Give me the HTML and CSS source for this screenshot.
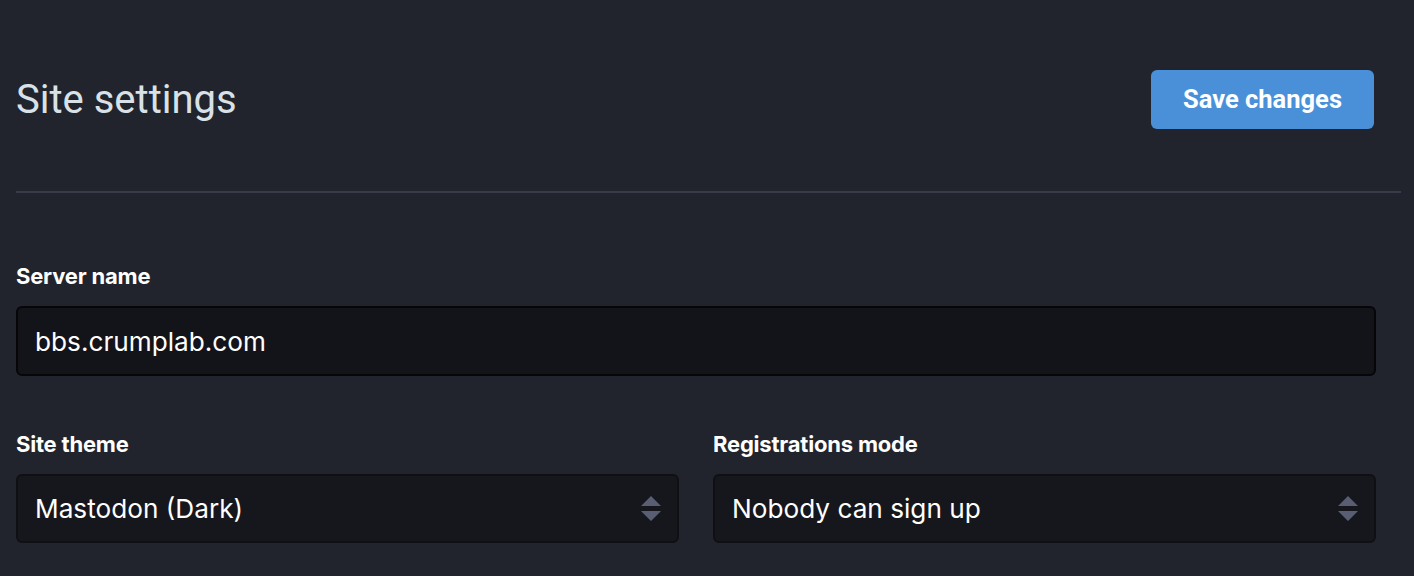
FILE: index.html
```html
<!DOCTYPE html>
<html lang="en">
<head>
<meta charset="utf-8">
<title>Site settings</title>
<link rel="stylesheet" href="styles.css">
</head>
<body>
<main class="page">
  <header class="page-header">
    <h2 class="page-title">Site settings</h2>
    <button class="btn-save" type="button">Save changes</button>
  </header>
  <hr class="divider">
  <form class="settings-form">
    <div class="field">
      <label class="field-label" for="server-name">Server name</label>
      <div class="text-input" id="server-name">bbs.crumplab.com</div>
    </div>
    <div class="field-row">
      <div class="field">
        <label class="field-label">Site theme</label>
        <div class="select-input">
          <span class="select-value">Mastodon (Dark)</span>
          <svg class="select-arrows" width="22" height="26" viewBox="0 0 22 26"><path d="M11 0 L21 10 H1 Z M1 15 H21 L11 25 Z" fill="#595e72"/></svg>
        </div>
      </div>
      <div class="field">
        <label class="field-label">Registrations mode</label>
        <div class="select-input">
          <span class="select-value">Nobody can sign up</span>
          <svg class="select-arrows" width="22" height="26" viewBox="0 0 22 26"><path d="M11 0 L21 10 H1 Z M1 15 H21 L11 25 Z" fill="#595e72"/></svg>
        </div>
      </div>
    </div>
  </form>
</main>
</body>
</html>
```

FILE: styles.css
```css
html, body {
  margin: 0;
  padding: 0;
  background: #21242c;
}

.page {
  padding: 70px 13px 0 16px;
  font-family: Inter, "Noto Sans", sans-serif;
  color: #ffffff;
}

.page-header {
  display: flex;
  align-items: center;
  justify-content: space-between;
  padding-right: 27px;
}

.page-title {
  margin: 0;
  font-family: Roboto, "Liberation Sans", sans-serif;
  font-weight: 400;
  font-size: 40px;
  line-height: 59px;
  color: #d9e1e8;
}

.btn-save {
  width: 223px;
  height: 59px;
  border: 0;
  border-radius: 6px;
  background: #4a90d9;
  color: #ffffff;
  font-family: Roboto, "Liberation Sans", sans-serif;
  font-weight: 700;
  font-size: 25.5px;
  padding: 0 0 2px 0;
}

.divider {
  margin: 62px 0 0 0;
  border: 0;
  height: 2px;
  background: #393c48;
}

.settings-form {
  padding-top: 69px;
  padding-right: 25px;
}

.field-label {
  display: block;
  font-weight: 700;
  font-size: 22px;
  line-height: 28px;
  margin-bottom: 16px;
  color: #ffffff;
  letter-spacing: -0.2px;
}

.text-input,
.select-input {
  box-sizing: border-box;
  height: 70px;
  border-radius: 6px;
  display: flex;
  align-items: center;
  padding: 0 15px 0 17px;
  font-size: 26.2px;
  color: #ffffff;
}

.text-input {
  background: #131419;
  border: 2px solid #060608;
}

.field-row {
  margin-top: 54px;
  display: grid;
  grid-template-columns: 1fr 1fr;
  gap: 34px;
}

.select-input {
  height: 69px;
  background: #16171c;
  border: 2px solid #0f1013;
  justify-content: space-between;
}

.select-arrows {
  display: block;
}
```
